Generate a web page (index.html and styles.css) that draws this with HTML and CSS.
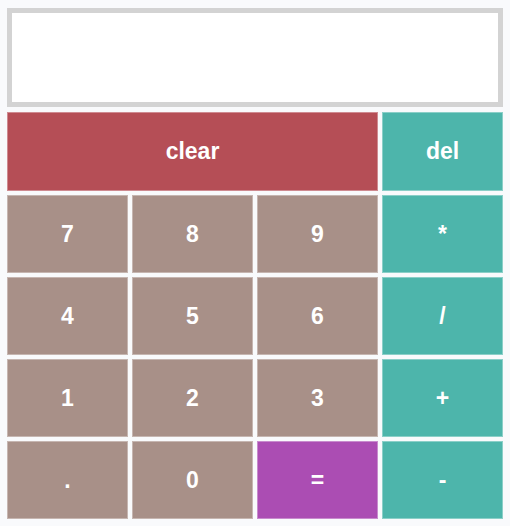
FILE: index.html
```html
<!DOCTYPE html>
<html>
<head>
<meta charset="utf-8">
<link rel="stylesheet" href="styles.css">
</head>
<body>
<div class="calc">
  <div class="display"></div>
  <div class="keys">
    <button class="key key-clear">clear</button>
    <button class="key key-op">del</button>
    <button class="key key-num">7</button>
    <button class="key key-num">8</button>
    <button class="key key-num">9</button>
    <button class="key key-op">*</button>
    <button class="key key-num">4</button>
    <button class="key key-num">5</button>
    <button class="key key-num">6</button>
    <button class="key key-op">/</button>
    <button class="key key-num">1</button>
    <button class="key key-num">2</button>
    <button class="key key-num">3</button>
    <button class="key key-op">+</button>
    <button class="key key-num">.</button>
    <button class="key key-num">0</button>
    <button class="key key-eq">=</button>
    <button class="key key-op">-</button>
  </div>
</div>
</body>
</html>
```
FILE: styles.css
```css
html, body {
  margin: 0;
  background: #f9fafc;
}
body {
  padding: 8px 7px;
  font-family: "Liberation Sans", Arial, sans-serif;
}
.calc {
  width: 496px;
  display: flex;
  flex-direction: column;
  gap: 5px;
}
.display {
  box-sizing: border-box;
  height: 99px;
  border: 5px solid #d3d3d3;
  background: #ffffff;
}
.keys {
  display: grid;
  grid-template-columns: repeat(4, 121px);
  grid-template-rows: 79px repeat(4, 78px);
  column-gap: 4px;
  row-gap: 4px;
}
.key {
  box-sizing: border-box;
  margin: 0;
  padding: 0;
  border: 1px solid rgba(255, 255, 255, 0.35);
  color: #ffffff;
  font-family: "Liberation Sans", Arial, sans-serif;
  font-weight: bold;
  font-size: 23px;
  display: flex;
  align-items: center;
  justify-content: center;
}
.key-clear {
  grid-column: span 3;
  background: #b54e56;
}
.key-num {
  background: #a89088;
}
.key-op {
  background: #4db5ab;
}
.key-eq {
  background: #ab4db3;
}
```
